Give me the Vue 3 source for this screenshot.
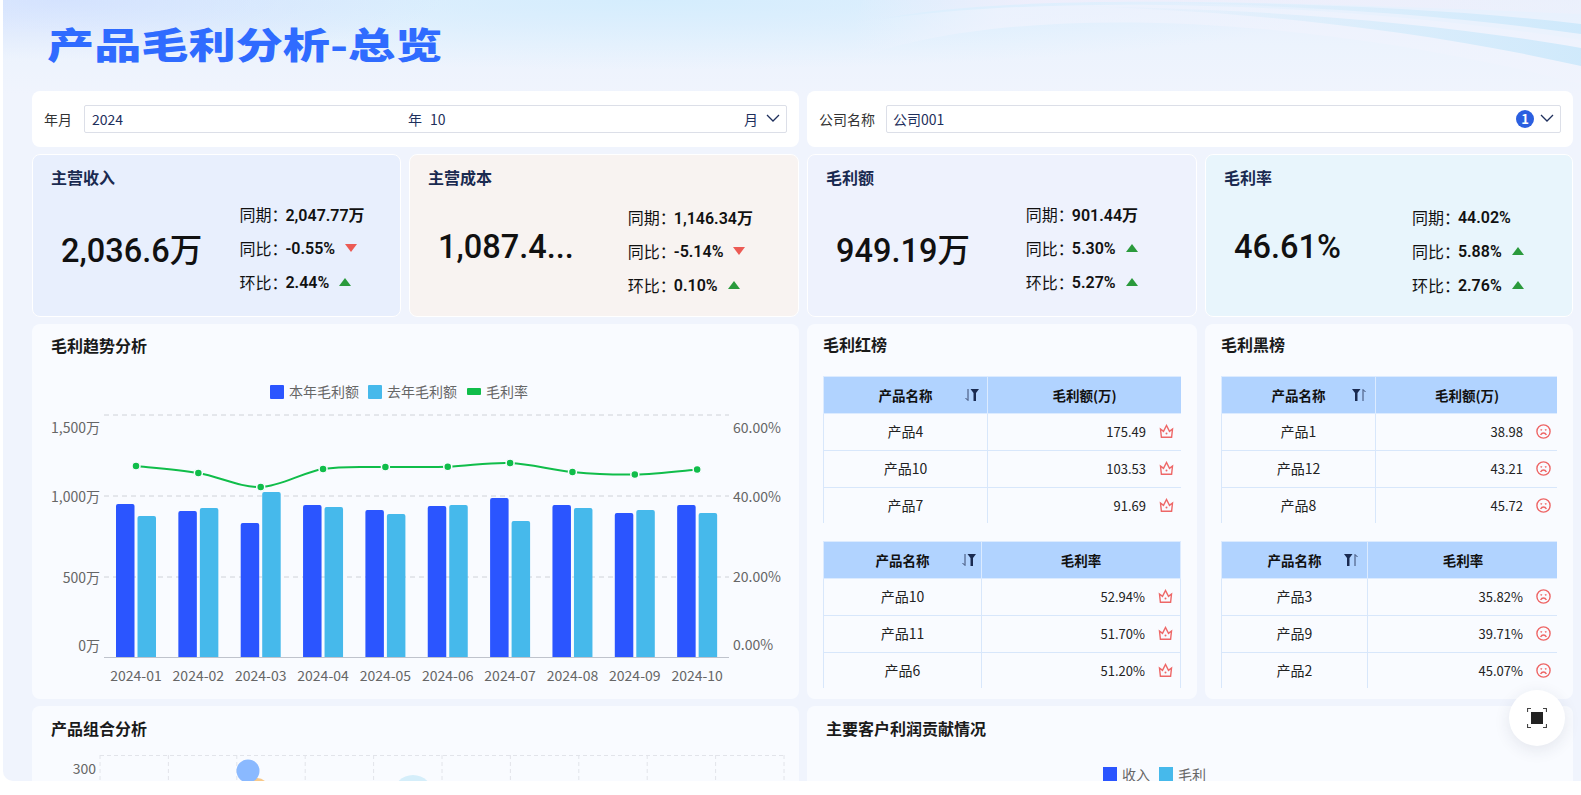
<script setup>
const kpis = [
  { title: '主营收入', big: '2,036.6万', tone: 'blue', same: '2,047.77万', yoy: '-0.55%', yoyUp: false, mom: '2.44%', momUp: true },
  { title: '主营成本', big: '1,087.4...', tone: 'sand', low: true, same: '1,146.34万', yoy: '-5.14%', yoyUp: false, mom: '0.10%', momUp: true },
  { title: '毛利额', big: '949.19万', tone: 'lilac', same: '901.44万', yoy: '5.30%', yoyUp: true, mom: '5.27%', momUp: true },
  { title: '毛利率', big: '46.61%', tone: 'sky', low: true, same: '44.02%', yoy: '5.88%', yoyUp: true, mom: '2.76%', momUp: true },
]

// page coordinates, the svg viewBox starts where the chart sits on the page
const months = ['2024-01', '2024-02', '2024-03', '2024-04', '2024-05', '2024-06', '2024-07', '2024-08', '2024-09', '2024-10']
const baseY = 657
const thisYear = [504, 511, 523, 505, 510, 506, 498, 505, 513, 505]
const lastYear = [516, 508, 492, 507, 514, 505, 521, 508, 510, 513]
const rateY = [466, 473, 487, 469, 467, 466.7, 463, 472, 474.5, 469.5]
const groupX = (i) => 136 + i * 62.35

const points = rateY.map((y, i) => [groupX(i), y])
const linePath = points.reduce((d, p, i) => {
  if (i === 0) return `M${p[0]} ${p[1]}`
  const p0 = points[i - 2] || points[i - 1]
  const p1 = points[i - 1]
  const p3 = points[i + 1] || p
  const c1 = [p1[0] + (p[0] - p0[0]) / 6, p1[1] + (p[1] - p0[1]) / 6]
  const c2 = [p[0] - (p3[0] - p1[0]) / 6, p[1] - (p3[1] - p1[1]) / 6]
  return `${d} C${c1[0]} ${c1[1]} ${c2[0]} ${c2[1]} ${p[0]} ${p[1]}`
}, '')

const grid = [415, 496, 577]
const leftTicks = [['1,500万', 428], ['1,000万', 497], ['500万', 578], ['0万', 646]]
const rightTicks = [['60.00%', 428], ['40.00%', 497], ['20.00%', 577], ['0.00%', 645]]

const redTables = [
  {
    widths: [164, 194], right: 15, head: '毛利额(万)',
    rows: [['产品4', '175.49'], ['产品10', '103.53'], ['产品7', '91.69']],
  },
  {
    widths: [158, 199], right: 12, head: '毛利率',
    rows: [['产品10', '52.94%'], ['产品11', '51.70%'], ['产品6', '51.20%']],
  },
]
const blackTables = [
  {
    widths: [154, 183], right: 16, head: '毛利额(万)',
    rows: [['产品1', '38.98'], ['产品12', '43.21'], ['产品8', '45.72']],
  },
  {
    widths: [146, 191], right: 16, head: '毛利率',
    rows: [['产品3', '35.82%'], ['产品9', '39.71%'], ['产品2', '45.07%']],
  },
]
const boards = [
  { title: '毛利红榜', tables: redTables, kind: 'red' },
  { title: '毛利黑榜', tables: blackTables, kind: 'black' },
]

const scatterX = [100, 168.4, 236.8, 305.2, 373.6, 442, 510.4, 578.8, 647.2, 715.6, 784]
</script>

<template>
  <div class="page">
    <div class="panel">
      <svg class="swoosh" viewBox="0 0 1578 110" preserveAspectRatio="none">
        <defs>
          <linearGradient id="sw1" x1="0" y1="0" x2="1" y2="0">
            <stop offset="0" stop-color="#f3eefb" stop-opacity="0" />
            <stop offset="0.25" stop-color="#f3eefb" stop-opacity="0.75" />
            <stop offset="1" stop-color="#eef0fb" stop-opacity="0.6" />
          </linearGradient>
          <linearGradient id="sw2" x1="0" y1="0" x2="1" y2="0">
            <stop offset="0" stop-color="#d3ebfb" stop-opacity="0" />
            <stop offset="0.6" stop-color="#d3ebfb" stop-opacity="0.7" />
            <stop offset="1" stop-color="#c8e7fb" stop-opacity="0.8" />
          </linearGradient>
          <linearGradient id="sw3" x1="0" y1="0" x2="1" y2="0">
            <stop offset="0" stop-color="#f1f3fd" stop-opacity="0" />
            <stop offset="0.2" stop-color="#f1f3fd" stop-opacity="0.7" />
            <stop offset="1" stop-color="#f1f3fd" stop-opacity="0.5" />
          </linearGradient>
        </defs>
        <path d="M850 26C960 -6 1200 -2 1578 14V0H860Z" fill="url(#sw1)" />
        <path d="M850 60C1000 2 1300 12 1578 84V40C1300 -4 1000 -4 850 24Z" fill="url(#sw3)" />
        <path d="M1060 6C1240 10 1420 30 1578 66V48C1430 22 1250 8 1060 6Z" fill="url(#sw2)" />
        <path d="M1120 2C1280 4 1440 14 1578 34V24C1440 8 1280 2 1120 2Z" fill="url(#sw2)" />
      </svg>

      <h1 class="title">产品毛利分析-总览</h1>

      <div class="board">
        <div class="half filters">
          <span class="filter-label">年月</span>
          <div class="select">
            <span class="year">2024</span>
            <span class="month">年<i>10</i></span>
            <span class="end">月</span>
            <svg class="chevron" viewBox="0 0 14 8"><path d="M1 1l6 6 6-6" /></svg>
          </div>
        </div>
        <div class="half filters">
          <span class="filter-label">公司名称</span>
          <div class="select company">
            <span class="year">公司001</span>
            <span class="count">1</span>
            <svg class="chevron" viewBox="0 0 14 8"><path d="M1 1l6 6 6-6" /></svg>
          </div>
        </div>

        <div class="half pair kpi-left">
          <div v-for="k in kpis.slice(0, 2)" :key="k.title" class="kpi" :class="[k.tone, { low: k.low }]">
            <div class="kpi-title">{{ k.title }}</div>
            <div class="kpi-body">
              <div class="kpi-big">{{ k.big }}</div>
              <div class="kpi-side">
                <div class="kpi-row"><span>同期：</span><b>{{ k.same }}</b></div>
                <div class="kpi-row"><span>同比：</span><b>{{ k.yoy }}</b><em :class="k.yoyUp ? 'up' : 'down'"></em></div>
                <div class="kpi-row"><span>环比：</span><b>{{ k.mom }}</b><em :class="k.momUp ? 'up' : 'down'"></em></div>
              </div>
            </div>
          </div>
        </div>
        <div class="half pair kpi-right">
          <div v-for="k in kpis.slice(2)" :key="k.title" class="kpi" :class="[k.tone, { low: k.low }]">
            <div class="kpi-title">{{ k.title }}</div>
            <div class="kpi-body">
              <div class="kpi-big">{{ k.big }}</div>
              <div class="kpi-side">
                <div class="kpi-row"><span>同期：</span><b>{{ k.same }}</b></div>
                <div class="kpi-row"><span>同比：</span><b>{{ k.yoy }}</b><em :class="k.yoyUp ? 'up' : 'down'"></em></div>
                <div class="kpi-row"><span>环比：</span><b>{{ k.mom }}</b><em :class="k.momUp ? 'up' : 'down'"></em></div>
              </div>
            </div>
          </div>
        </div>

        <div class="half card trend">
          <div class="card-title">毛利趋势分析</div>
          <svg class="chart" viewBox="32 370 767 322">
            <rect x="270" y="385" width="14" height="14" rx="1" fill="#2b55ff" />
            <text x="289" y="397" class="legend">本年毛利额</text>
            <rect x="368" y="385" width="14" height="14" rx="1" fill="#46b9eb" />
            <text x="387" y="397" class="legend">去年毛利额</text>
            <rect x="467" y="388" width="14" height="7" rx="1" fill="#10bd4a" />
            <text x="486" y="397" class="legend">毛利率</text>

            <line v-for="y in grid" :key="y" x1="104" x2="729" :y1="y" :y2="y" class="grid" />
            <text v-for="t in leftTicks" :key="t[0]" x="100" :y="t[1] + 5" text-anchor="end" class="tick">{{ t[0] }}</text>
            <text v-for="t in rightTicks" :key="t[0]" x="733" :y="t[1] + 5" class="tick">{{ t[0] }}</text>

            <g v-for="(m, i) in months" :key="m">
              <path :d="`M${groupX(i) - 20} ${baseY}v${thisYear[i] - baseY + 2}q0 -2 2 -2h14.5q2 0 2 2v${baseY - thisYear[i] - 2}z`" fill="#2b55ff" />
              <path :d="`M${groupX(i) + 1.5} ${baseY}v${lastYear[i] - baseY + 2}q0 -2 2 -2h14.5q2 0 2 2v${baseY - lastYear[i] - 2}z`" fill="#46b9eb" />
              <text :x="groupX(i)" y="681" text-anchor="middle" class="tick">{{ m }}</text>
            </g>
            <line x1="104" x2="729" y1="657.5" y2="657.5" class="axis" />

            <path :d="linePath" class="rate" />
            <circle v-for="(p, i) in points" :key="i" :cx="p[0]" :cy="p[1]" r="4" class="dot" />
          </svg>
        </div>

        <div class="half pair boards">
          <div v-for="b in boards" :key="b.title" class="card rank">
            <div class="card-title">{{ b.title }}</div>
            <div class="rank-tables">
              <div v-for="t in b.tables" :key="t.head" class="table-clip">
                <table>
                  <colgroup>
                    <col :style="{ width: t.widths[0] + 'px' }" />
                    <col :style="{ width: t.widths[1] + 'px' }" />
                  </colgroup>
                  <thead>
                    <tr>
                      <th>
                        产品名称
                        <svg class="sort" :style="{ right: t.right - 8 + 'px' }" viewBox="0 0 16 14">
                          <template v-if="b.kind === 'red'">
                            <path d="M4 1v11.5M4 12.5L1.5 10" class="sort-thin" />
                            <path d="M6.5 1h8.5l-3 4v8h-2.5V5z" class="sort-fill" />
                          </template>
                          <template v-else>
                            <path d="M1 1h8.5l-3 4v8H4V5z" class="sort-fill" />
                            <path d="M12 13V1.5M12 1.5L14.5 4" class="sort-thin" />
                          </template>
                        </svg>
                      </th>
                      <th>{{ t.head }}</th>
                    </tr>
                  </thead>
                  <tbody>
                    <tr v-for="r in t.rows" :key="r[0]">
                      <td class="name">{{ r[0] }}</td>
                      <td class="value">
                        <span>{{ r[1] }}</span>
                        <svg v-if="b.kind === 'red'" class="mark" viewBox="0 0 15 15">
                          <path d="M1.5 5l3 2.4L7.5 1.5l3 5.9 3-2.4-.9 8.3H2.4z" />
                          <circle cx="7.5" cy="9.5" r="1" />
                        </svg>
                        <svg v-else class="mark" viewBox="0 0 15 15">
                          <circle cx="7.5" cy="7.5" r="6.6" />
                          <path d="M4.6 11c.7-1.4 1.7-2 2.9-2s2.2.6 2.9 2" />
                          <path d="M4.5 5.6l1.6.6M10.5 5.6l-1.6.6" />
                        </svg>
                      </td>
                    </tr>
                  </tbody>
                </table>
              </div>
            </div>
          </div>
        </div>

        <div class="half card combo">
          <div class="card-title">产品组合分析</div>
          <svg class="scatter" viewBox="32 748 767 60">
            <path d="M100 755.5H784" class="scatter-grid" />
            <line v-for="x in scatterX" :key="x" :x1="x" :x2="x" y1="755" y2="808" class="scatter-grid" />
            <text x="96" y="774" text-anchor="end" class="tick">300</text>
            <circle cx="257" cy="790" r="12" fill="#f8c98a" />
            <circle cx="248" cy="771" r="11.5" fill="#8ab9ff" />
            <circle cx="413" cy="795" r="20" fill="#d5eefa" />
          </svg>
        </div>
        <div class="half card customer">
          <div class="card-title">主要客户利润贡献情况</div>
          <div class="customer-legend">
            <i class="swatch s-income"></i><span>收入</span>
            <i class="swatch s-profit"></i><span>毛利</span>
          </div>
        </div>
      </div>
    </div>

    <div class="fullscreen">
      <svg viewBox="0 0 20 20">
        <path d="M.5 4V.5H4M16 .5h3.5V4M19.5 16v3.5H16M4 19.5H.5V16" class="corner" />
        <rect x="4" y="4" width="12" height="12" fill="#222" />
      </svg>
    </div>
  </div>
</template>

<style>
html,
body {
  margin: 0;
  background: #fff;
}
</style>

<style scoped>
.page {
  position: relative;
  width: 1581px;
  height: 795px;
  overflow: hidden;
  background: #fff;
  font-family: "Noto Sans CJK SC", sans-serif;
}

.panel {
  position: relative;
  margin-left: 3px;
  height: 781px;
  overflow: hidden;
  border-bottom-left-radius: 10px;
  background:
    radial-gradient(380px 60px at 60px 0, rgba(200, 216, 255, 0.55), rgba(200, 216, 255, 0) 100%),
    radial-gradient(700px 70px at 650px 0, rgba(208, 236, 253, 0.8), rgba(208, 236, 253, 0) 100%),
    linear-gradient(180deg, #e6f0fd 0, #ecf3fd 45px, #f0f4fd 95px);
  background-color: #f0f4fd;
}

.swoosh {
  position: absolute;
  top: 0;
  left: 0;
  width: 100%;
  height: 110px;
}

.title {
  position: absolute;
  top: 18px;
  left: 44px;
  margin: 0;
  font-size: 36px;
  line-height: 50px;
  font-weight: 900;
  color: #2f6bff;
  white-space: nowrap;
  transform: scaleX(1.31);
  transform-origin: left center;
}

.board {
  position: relative;
  display: grid;
  grid-template-columns: 767px 766px;
  grid-template-rows: 56px 163px 375px 200px;
  gap: 7px 8px;
  padding: 91px 0 0 29px;
}

.half {
  min-width: 0;
}

.filters {
  display: flex;
  align-items: center;
  padding: 0 12px;
  background: #fff;
  border-radius: 8px;
  font-size: 14px;
  color: #333;
}

.filter-label {
  flex: none;
  margin-right: 12px;
}

.select {
  flex: 1;
  position: relative;
  display: flex;
  align-items: center;
  height: 28px;
  box-sizing: border-box;
  padding: 0 28px 0 7px;
  background: #fff;
  border: 1px solid #dcdfe8;
  border-radius: 2px;
  font-size: 14px;
  color: #1e2f5c;
}

.year {
  flex: none;
  width: 316px;
}

.month {
  flex: 1;
}

.month i {
  font-style: normal;
  margin-left: 8px;
}

.company {
  margin-left: -1px;
  padding-left: 6px;
}

.company .year {
  flex: 1;
}

.count {
  position: absolute;
  right: 26px;
  top: 4px;
  width: 18px;
  height: 18px;
  border-radius: 50%;
  background: #2b5fe0;
  color: #fff;
  font-size: 13px;
  font-weight: 700;
  line-height: 18px;
  text-align: center;
}

.chevron {
  position: absolute;
  right: 6px;
  top: 8px;
  width: 14px;
  height: 8px;
  fill: none;
  stroke: #1e2f5c;
  stroke-width: 1.3;
}

.pair {
  display: grid;
  gap: 8px;
}

.kpi-left {
  grid-template-columns: 369px 390px;
}

.kpi-right {
  grid-template-columns: 390px 368px;
}

.boards {
  grid-template-columns: 390px 368px;
}

.kpi {
  box-sizing: border-box;
  padding: 11px 0 0 18px;
  border: 1px solid #fff;
  border-radius: 8px;
  color: #111;
  font-family: Roboto, "Noto Sans CJK SC", sans-serif;
}

.blue {
  background: #e8effd;
}

.sand {
  background: #f8f3f1;
}

.lilac {
  background: #eef2fd;
}

.sky {
  background: #e8f5fc;
}

.kpi-title {
  font-family: "Noto Sans CJK SC", sans-serif;
  font-size: 16px;
  font-weight: 700;
  line-height: 22px;
  color: #1a2a50;
}

.kpi-body {
  display: grid;
  grid-template-columns: 54% 46%;
  margin-top: 9px;
}

.kpi-big {
  align-self: center;
  margin-top: -2px;
  padding: 0 0 0 10px;
  font-size: 32.5px;
  font-weight: 500;
  white-space: nowrap;
  color: #111;
}

.kpi-side {
  display: flex;
  flex-direction: column;
}

.low .kpi-side {
  margin-top: 3px;
}

.low .kpi-big {
  margin-top: -6px;
}

.kpi-row {
  display: flex;
  align-items: center;
  height: 34px;
  font-size: 16px;
  white-space: nowrap;
}

.kpi-row span {
  width: 46px;
  font-family: "Noto Sans CJK SC", sans-serif;
}

.kpi-row b {
  font-weight: 600;
}

.kpi-row em {
  margin-left: 10px;
  width: 0;
  height: 0;
  border-left: 6px solid transparent;
  border-right: 6px solid transparent;
}

.up {
  border-bottom: 8px solid #2a9a3c;
}

.down {
  border-top: 8px solid #ec5a54;
}

.card {
  box-sizing: border-box;
  background: #f9fbff;
  border-radius: 8px;
  overflow: hidden;
}

.card-title {
  padding: 9px 0 0 16px;
  font-size: 16px;
  font-weight: 700;
  line-height: 24px;
  color: #1a1a1a;
}

.trend .card-title,
.combo .card-title,
.customer .card-title {
  padding-left: 19px;
}

.combo .card-title,
.customer .card-title {
  padding-top: 10px;
}

.chart {
  display: block;
  width: 767px;
  height: 322px;
  margin-top: 13px;
}

.legend {
  font-size: 14px;
  fill: #666;
}

.tick {
  font-size: 14px;
  fill: #666;
}

.grid {
  stroke: #cfd2d8;
  stroke-dasharray: 5 4;
}

.axis {
  stroke: #bfc3cc;
}

.rate {
  fill: none;
  stroke: #10bd4a;
  stroke-width: 2;
}

.dot {
  fill: #10bd4a;
  stroke: #f9fbff;
  stroke-width: 1.5;
}

.rank {
  padding: 0 16px;
}

.rank .card-title {
  padding-top: 8px;
  padding-left: 0;
  height: 44px;
}

.rank-tables {
  display: flex;
  flex-direction: column;
  gap: 18px;
}

.table-clip {
  height: 147px;
  overflow: hidden;
}

table {
  width: 100%;
  table-layout: fixed;
  border-collapse: collapse;
  font-size: 14px;
  color: #222;
}

th {
  position: relative;
  height: 36px;
  padding: 0;
  background: #b1d3ff;
  border: 1px solid #dcebff;
  font-size: 13.5px;
  font-weight: 700;
  color: #111;
}

td {
  height: 34px;
  padding: 0 0 2px;
  border: 1px solid #d8e7fb;
}

.name {
  text-align: center;
}

.value {
  font-size: 13px;
  text-align: right;
  padding-right: 7px;
}

.value span {
  margin-right: 13px;
  vertical-align: middle;
}

.mark {
  width: 15px;
  height: 15px;
  vertical-align: middle;
  fill: none;
  stroke: #ee6767;
  stroke-width: 1.4;
}

.mark circle[r="1"] {
  fill: #ee6767;
  stroke: none;
}

.sort {
  position: absolute;
  top: 11px;
  width: 16px;
  height: 14px;
}

.sort-fill {
  fill: #1a2a50;
}

.sort-thin {
  fill: none;
  stroke: #3a4a70;
  stroke-width: 1;
}

.scatter {
  display: block;
  width: 767px;
  height: 60px;
  margin-top: 8px;
}

.scatter-grid {
  fill: none;
  stroke: #e2e4ea;
  stroke-dasharray: 4 3;
}

.customer-legend {
  display: flex;
  align-items: center;
  padding: 27px 0 0 296px;
  font-size: 14px;
  line-height: 14px;
  color: #666;
}

.swatch {
  width: 14px;
  height: 14px;
  margin-right: 5px;
}

.customer-legend span {
  margin-right: 9px;
}

.s-income {
  background: #2b55ff;
}

.s-profit {
  background: #46b9eb;
}

.fullscreen {
  position: absolute;
  left: 1509px;
  top: 690px;
  display: flex;
  align-items: center;
  justify-content: center;
  width: 56px;
  height: 56px;
  border-radius: 50%;
  background: #fff;
  box-shadow: 0 4px 16px rgba(40, 50, 80, 0.1);
}

.fullscreen svg {
  width: 20px;
  height: 20px;
}

.corner {
  fill: none;
  stroke: #444;
  stroke-width: 1.2;
}
</style>
